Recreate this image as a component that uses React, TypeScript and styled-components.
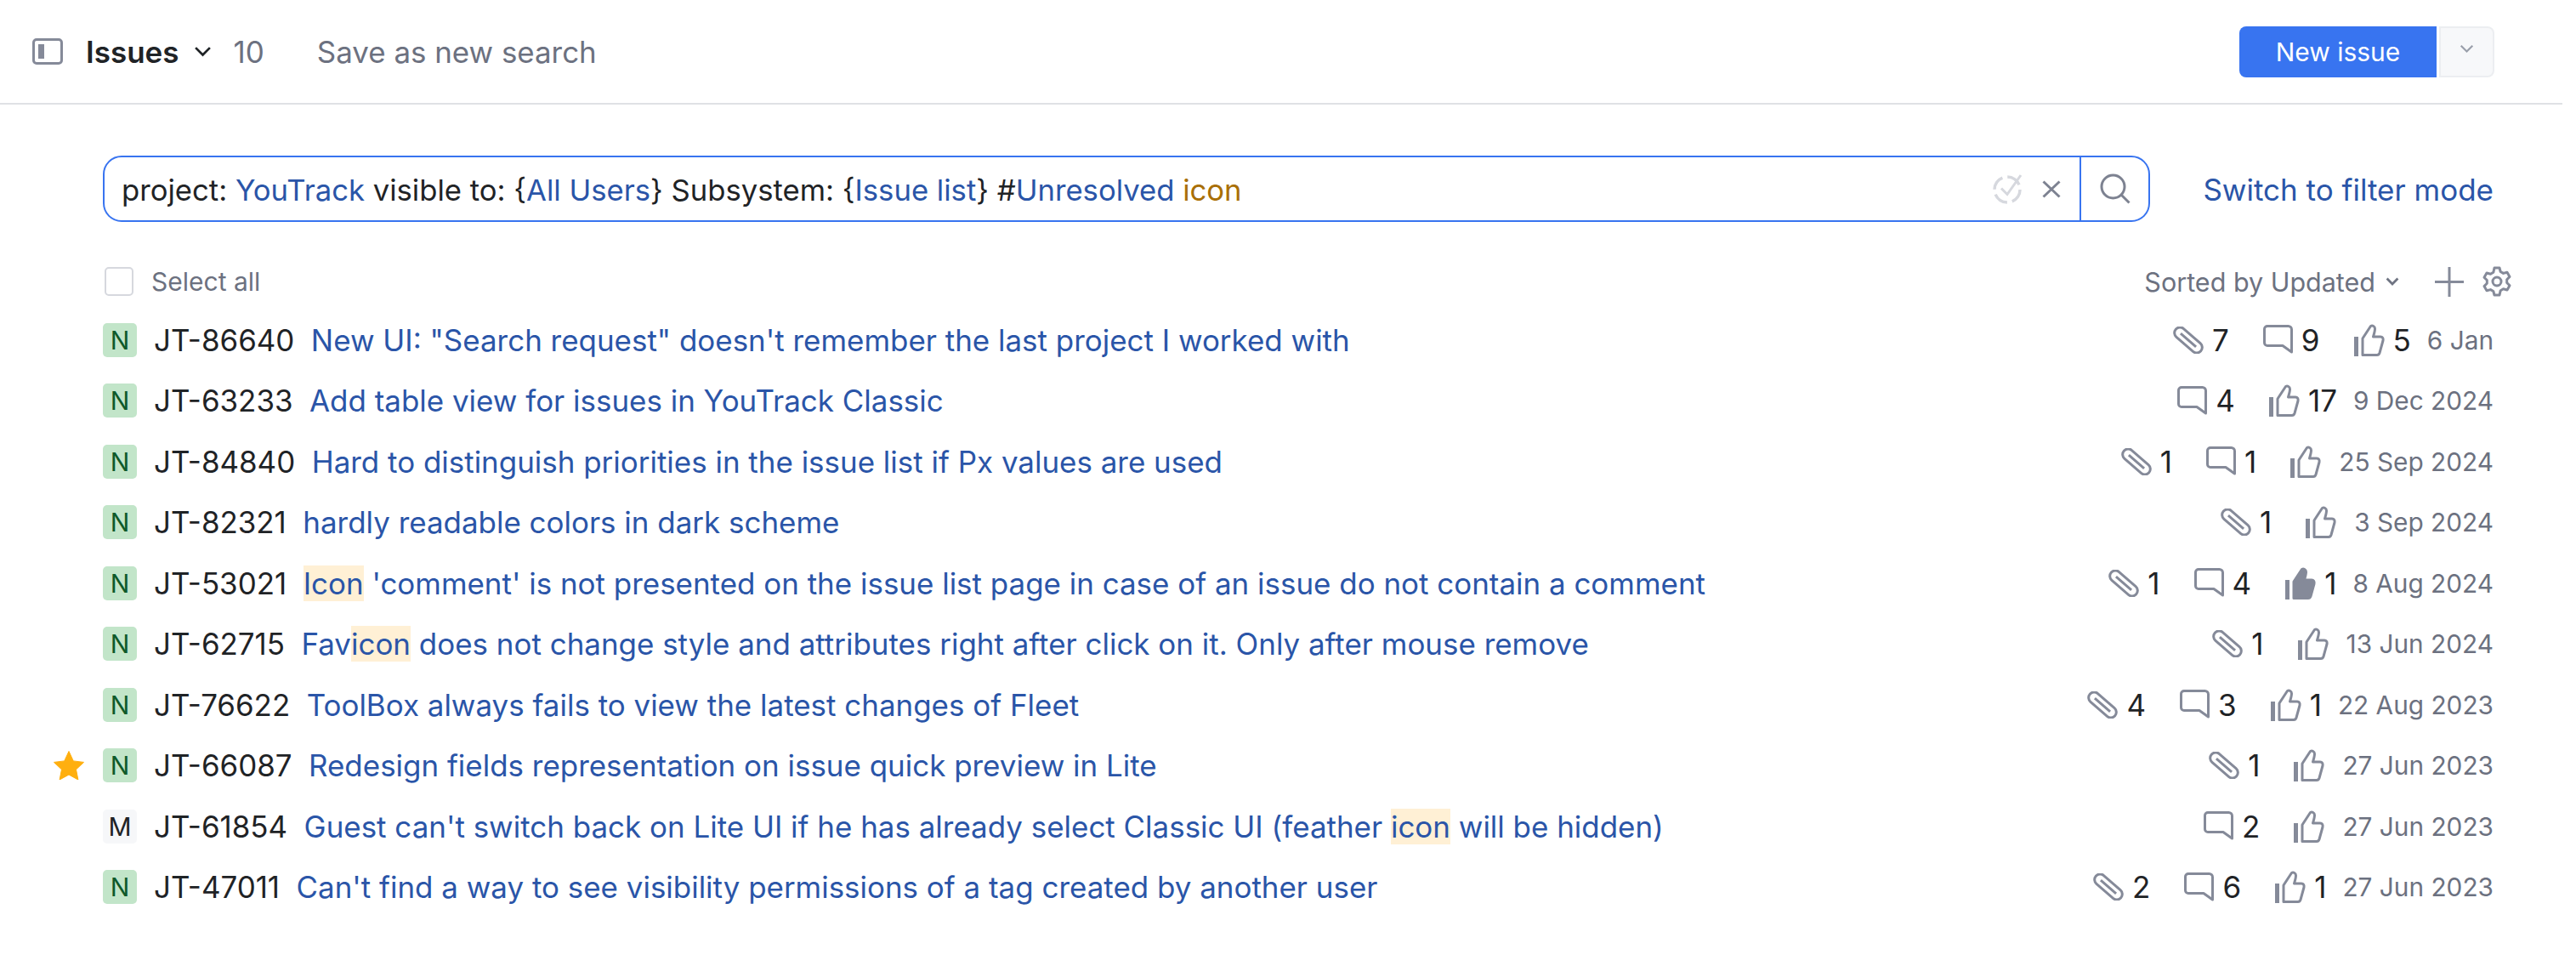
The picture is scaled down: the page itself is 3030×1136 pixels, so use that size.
import { FC } from 'react';
import styled, { createGlobalStyle } from 'styled-components';

type Token = { text: string; kind?: 'link' | 'match' | 'plain' };

type Issue = {
  id: string;
  title: string;
  priority: 'N' | 'M';
  starred?: boolean;
  attachments?: number;
  comments?: number;
  votes?: number;
  voted?: boolean;
  date: string;
};

const query: Token[] = [
  { text: 'project: ' },
  { text: 'YouTrack', kind: 'link' },
  { text: ' visible to: {' },
  { text: 'All Users', kind: 'link' },
  { text: '} Subsystem: {' },
  { text: 'Issue list', kind: 'link' },
  { text: '} #' },
  { text: 'Unresolved', kind: 'link' },
  { text: ' ' },
  { text: 'icon', kind: 'match' },
];

const issues: Issue[] = [
  { id: 'JT-86640', title: 'New UI: "Search request" doesn\'t remember the last project I worked with', priority: 'N', attachments: 7, comments: 9, votes: 5, date: '6 Jan' },
  { id: 'JT-63233', title: 'Add table view for issues in YouTrack Classic', priority: 'N', comments: 4, votes: 17, date: '9 Dec 2024' },
  { id: 'JT-84840', title: 'Hard to distinguish priorities in the issue list if Px values are used', priority: 'N', attachments: 1, comments: 1, date: '25 Sep 2024' },
  { id: 'JT-82321', title: 'hardly readable colors in dark scheme', priority: 'N', attachments: 1, date: '3 Sep 2024' },
  { id: 'JT-53021', title: "{Icon} 'comment' is not presented on the issue list page in case of an issue do not contain a comment", priority: 'N', attachments: 1, comments: 4, votes: 1, voted: true, date: '8 Aug 2024' },
  { id: 'JT-62715', title: 'Fav{icon} does not change style and attributes right after click on it. Only after mouse remove', priority: 'N', attachments: 1, date: '13 Jun 2024' },
  { id: 'JT-76622', title: 'ToolBox always fails to view the latest changes of Fleet', priority: 'N', attachments: 4, comments: 3, votes: 1, date: '22 Aug 2023' },
  { id: 'JT-66087', title: 'Redesign fields representation on issue quick preview in Lite', priority: 'N', starred: true, attachments: 1, date: '27 Jun 2023' },
  { id: 'JT-61854', title: "Guest can't switch back on Lite UI if he has already select Classic UI (feather {icon} will be hidden)", priority: 'M', comments: 2, date: '27 Jun 2023' },
  { id: 'JT-47011', title: "Can't find a way to see visibility permissions of a tag created by another user", priority: 'N', attachments: 2, comments: 6, votes: 1, date: '27 Jun 2023' },
];

const GlobalStyle = createGlobalStyle`
  html, body {
    margin: 0;
    padding: 0;
    background: #fff;
  }
  body {
    font-family: Inter, "Liberation Sans", sans-serif;
    color: #1f2326;
  }
`;

const PanelIcon: FC = () => (
  <svg width="36" height="31" viewBox="0 0 36 31" fill="none">
    <rect x="1.5" y="1.5" width="33" height="28" rx="3.5" stroke="#858a99" strokeWidth="3" />
    <rect x="7" y="7" width="7" height="17" fill="#858a99" />
  </svg>
);

const Chevron: FC<{ size: number; color: string; stroke?: number }> = ({ size, color, stroke = 2.6 }) => (
  <svg width={size} height={size * 0.62} viewBox="0 0 20 12.4" fill="none">
    <path d="M2 2l8 8 8-8" stroke={color} strokeWidth={stroke} />
  </svg>
);

const ClipIcon: FC = () => (
  <svg width="36" height="32" viewBox="0 0 36 32" fill="none">
    <g transform="rotate(41 18 16)" stroke="#858a99" strokeWidth="3">
      <rect x="-1.5" y="9.5" width="39" height="13" rx="6.5" />
      <path d="M6 16H30" />
    </g>
  </svg>
);

const CommentIcon: FC = () => (
  <svg width="35" height="35" viewBox="0 0 35 35" fill="none">
    <path
      d="M5 1.500H29.500a4 4 0 0 1 4 4V32L23 24.500H5a3.500 3.500 0 0 1-3.500-3.500V5A3.500 3.500 0 0 1 5 1.500z"
      stroke="#858a99"
      strokeWidth="3"
      strokeLinejoin="round"
    />
  </svg>
);

const ThumbIcon: FC<{ filled?: boolean }> = ({ filled }) => (
  <svg width="36" height="38" viewBox="0 0 36 38" fill="none">
    <rect x="0" y="15" width="5" height="23" fill="#858a99" />
    <path
      d="M10 36.500V17L19.500 2.500c2-1 5 0 5 3 0 3-1 6-2 9.500H31c2.500 0 3.500 2 3 4.500l-4 14.500c-.5 1.500-1.500 2.500-3 2.500z"
      stroke="#858a99"
      strokeWidth="3"
      fill={filled ? '#858a99' : 'none'}
      strokeLinejoin="round"
    />
  </svg>
);

const CheckDashedIcon: FC = () => (
  <svg width="38" height="36" viewBox="0 0 38 36" fill="none">
    <circle cx="17" cy="19" r="15" stroke="#d6d8de" strokeWidth="3.500" strokeDasharray="17.500 6" />
    <path d="M10 17.500l7 7L33 2" stroke="#d6d8de" strokeWidth="3" />
  </svg>
);

const CloseIcon: FC = () => (
  <svg width="22" height="21" viewBox="0 0 22 21" fill="none">
    <path d="M1.500 1.500l19 18M20.500 1.500l-19 18" stroke="#7d8291" strokeWidth="3" />
  </svg>
);

const SearchIcon: FC = () => (
  <svg width="36" height="36" viewBox="0 0 36 36" fill="none">
    <circle cx="15.500" cy="15.500" r="13.500" stroke="#7d8291" strokeWidth="3" />
    <path d="M25 25l9.500 9.500" stroke="#7d8291" strokeWidth="3" />
  </svg>
);

const PlusIcon: FC = () => (
  <svg width="34" height="35" viewBox="0 0 34 35" fill="none">
    <path d="M17 0v35M0 17.500h34" stroke="#858a99" strokeWidth="3" />
  </svg>
);

const GearIcon: FC = () => (
  <svg width="36" height="36" viewBox="0 0 36 36" fill="none">
    <path
      d="M15 2h6l1.200 4.500 3.300 1.900 4.500-1.200 3 5.200-3.300 3.300v3.800l3.300 3.300-3 5.200-4.500-1.200-3.300 1.900L21 34h-6l-1.200-4.500-3.300-1.900-4.500 1.200-3-5.200 3.300-3.300v-3.800L3 13.200l3-5.200 4.500 1.200 3.300-1.900z"
      stroke="#858a99"
      strokeWidth="3"
      strokeLinejoin="round"
    />
    <circle cx="18" cy="18" r="5" stroke="#858a99" strokeWidth="3" />
  </svg>
);

const StarIcon: FC = () => (
  <svg width="36" height="34" viewBox="0 0 36 34" fill="#ffaf0f">
    <path
      d="M18 .5l5.300 11.400 12.200 1.500-9 8.500 2.400 12.100L18 28l-10.900 6 2.400-12.100-9-8.500 12.200-1.500z"
      stroke="#ffaf0f"
      strokeWidth="1"
      strokeLinejoin="round"
    />
  </svg>
);

const renderTitle = (title: string) =>
  title.split(/(\{[^}]+\})/).map((part, i) =>
    part.startsWith('{') ? <Highlight key={i}>{part.slice(1, -1)}</Highlight> : part,
  );

const App: FC = () => {
  return (
    <PageStyled>
      <GlobalStyle />
      <HeaderStyled>
        <HeaderLeftStyled>
          <PanelIcon />
          <HeaderTitleStyled>
            Issues
            <Chevron size={21} color="#1f2326" />
          </HeaderTitleStyled>
          <CountStyled>10</CountStyled>
          <SaveSearchStyled>Save as new search</SaveSearchStyled>
        </HeaderLeftStyled>
        <ButtonGroupStyled>
          <PrimaryButtonStyled>New issue</PrimaryButtonStyled>
          <SplitButtonStyled>
            <Chevron size={17} color="#9a9fab" />
          </SplitButtonStyled>
        </ButtonGroupStyled>
      </HeaderStyled>

      <ContentStyled>
        <SearchRowStyled>
          <SearchBoxStyled>
            <QueryStyled>
              {query.map((token, i) => (
                <QueryToken key={i} $kind={token.kind ?? 'plain'}>
                  {token.text}
                </QueryToken>
              ))}
            </QueryStyled>
            <SearchActionsStyled>
              <CheckDashedIcon />
              <CloseIcon />
            </SearchActionsStyled>
            <SearchButtonStyled>
              <SearchIcon />
            </SearchButtonStyled>
          </SearchBoxStyled>
          <FilterLinkStyled>Switch to filter mode</FilterLinkStyled>
        </SearchRowStyled>

        <ToolbarStyled>
          <SelectAllStyled>
            <CheckboxStyled />
            Select all
          </SelectAllStyled>
          <ToolbarRightStyled>
            <SortStyled>
              Sorted by Updated
              <Chevron size={16} color="#6f7482" stroke={3.5} />
            </SortStyled>
            <PlusIcon />
            <GearIcon />
          </ToolbarRightStyled>
        </ToolbarStyled>

        <ListStyled>
          {issues.map((issue) => (
            <RowStyled key={issue.id}>
              <StarSlotStyled>{issue.starred && <StarIcon />}</StarSlotStyled>
              <PriorityStyled $priority={issue.priority}>{issue.priority}</PriorityStyled>
              <IssueIdStyled>{issue.id}</IssueIdStyled>
              <IssueTitleStyled>{renderTitle(issue.title)}</IssueTitleStyled>
              <MetaStyled>
                {issue.attachments !== undefined && (
                  <MetaItemStyled>
                    <ClipIcon />
                    {issue.attachments}
                  </MetaItemStyled>
                )}
                {issue.comments !== undefined && (
                  <MetaItemStyled>
                    <CommentIcon />
                    {issue.comments}
                  </MetaItemStyled>
                )}
                <VotesStyled>
                  <ThumbIcon filled={issue.voted} />
                  {issue.votes !== undefined && <VoteCountStyled>{issue.votes}</VoteCountStyled>}
                </VotesStyled>
                <DateStyled>{issue.date}</DateStyled>
              </MetaStyled>
            </RowStyled>
          ))}
        </ListStyled>
      </ContentStyled>
    </PageStyled>
  );
};

const PageStyled = styled.div`
  width: 3030px;
  height: 1136px;
  overflow: hidden;
  box-sizing: border-box;
  padding-right: 16px;
`;

const HeaderStyled = styled.header`
  height: 123px;
  box-sizing: border-box;
  border-bottom: 2px solid #dfe1e5;
  padding: 0 80px 0 38px;
  display: flex;
  align-items: center;
  justify-content: space-between;
`;

const HeaderLeftStyled = styled.div`
  display: flex;
  align-items: center;
`;

const HeaderTitleStyled = styled.div`
  margin-left: 27px;
  display: flex;
  align-items: center;
  gap: 17px;
  font-size: 35px;
  font-weight: 600;
  color: #1f2326;
`;

const CountStyled = styled.span`
  margin-left: 26px;
  font-size: 35px;
  color: #6c7180;
`;

const SaveSearchStyled = styled.span`
  margin-left: 62px;
  font-size: 34.9px;
  color: #6c7180;
`;

const ButtonGroupStyled = styled.div`
  display: flex;
  gap: 3px;
  height: 60px;
`;

const PrimaryButtonStyled = styled.div`
  width: 232px;
  display: flex;
  align-items: center;
  justify-content: center;
  background: #3874f0;
  border-radius: 8px 0 0 8px;
  color: #fff;
  font-size: 30px;
`;

const SplitButtonStyled = styled.div`
  width: 65px;
  box-sizing: border-box;
  display: flex;
  align-items: center;
  justify-content: center;
  background: #f7f8fa;
  border: 2px solid #eceef1;
  border-radius: 0 8px 8px 0;
  padding-bottom: 6px;
`;

const ContentStyled = styled.main`
  padding: 60px 81px 0 0;
`;

const SearchRowStyled = styled.div`
  display: flex;
  align-items: center;
  justify-content: space-between;
  padding-left: 121px;
`;

const SearchBoxStyled = styled.div`
  width: 2408px;
  height: 78px;
  box-sizing: border-box;
  border: 2px solid #3874f0;
  border-radius: 22px;
  display: flex;
  align-items: center;
  padding-left: 20px;
`;

const QueryStyled = styled.div`
  flex: 1;
  padding-top: 1px;
  font-size: 34.65px;
  color: #1f2326;
  white-space: pre;
`;

const QueryToken = styled.span<{ $kind: 'link' | 'match' | 'plain' }>`
  color: ${({ $kind }) =>
    $kind === 'link' ? '#2a55a8' : $kind === 'match' ? '#a96f06' : 'inherit'};
`;

const SearchActionsStyled = styled.div`
  display: flex;
  align-items: center;
  gap: 20px;
  padding-right: 22px;
`;

const SearchButtonStyled = styled.div`
  width: 81px;
  height: 100%;
  box-sizing: border-box;
  border-left: 2px solid #3874f0;
  display: flex;
  align-items: center;
  justify-content: center;
`;

const FilterLinkStyled = styled.div`
  padding-top: 1px;
  font-size: 35px;
  color: #2a55a8;
`;

const ToolbarStyled = styled.div`
  margin-top: 52px;
  height: 36px;
  display: flex;
  align-items: center;
  justify-content: space-between;
  padding-left: 123px;
`;

const SelectAllStyled = styled.label`
  display: flex;
  align-items: center;
  gap: 21px;
  font-size: 30px;
  color: #6c7180;
`;

const CheckboxStyled = styled.span`
  width: 34px;
  height: 34px;
  box-sizing: border-box;
  border: 2px solid #d6d8de;
  border-radius: 5px;
`;

const ToolbarRightStyled = styled.div`
  display: flex;
  align-items: center;
  margin-right: -22px;
  gap: 21px;
`;

const SortStyled = styled.div`
  display: flex;
  align-items: center;
  gap: 12px;
  margin-right: 21px;
  font-size: 30.5px;
  color: #6c7180;
`;

const ListStyled = styled.div`
  margin-top: 15px;
`;

const RowStyled = styled.div`
  height: 71.5px;
  display: flex;
  align-items: center;
`;

const StarSlotStyled = styled.div`
  width: 63px;
  margin-left: 63px;
  margin-right: -5px;
  display: flex;
`;

const PriorityStyled = styled.span<{ $priority: 'N' | 'M' }>`
  width: 40px;
  height: 40px;
  border-radius: 5px;
  display: flex;
  align-items: center;
  justify-content: center;
  font-size: 30px;
  background: ${({ $priority }) => ($priority === 'N' ? '#c2e5c9' : '#f6f7f9')};
  color: ${({ $priority }) => ($priority === 'N' ? '#0f5a2a' : '#1f2326')};
`;

const IssueIdStyled = styled.span`
  margin-left: 20px;
  font-size: 34.9px;
  color: #1f2326;
`;

const IssueTitleStyled = styled.span`
  margin-left: 19.5px;
  flex: 1;
  font-size: 34.95px;
  color: #2a55a8;
  white-space: nowrap;
`;

const Highlight = styled.span`
  background: #fff0d5;
`;

const MetaStyled = styled.div`
  display: flex;
  align-items: center;
  font-size: 35px;
  color: #1f2326;
`;

const MetaItemStyled = styled.span`
  display: flex;
  align-items: center;
  gap: 10px;
  margin-right: 40px;
`;

const VotesStyled = styled.span`
  display: flex;
  align-items: center;
  gap: 10px;
`;

const VoteCountStyled = styled.span`
  margin-right: -2px;
`;

const DateStyled = styled.span`
  margin-left: 21px;
  font-size: 29.8px;
  color: #6c7180;
`;

export default App;
